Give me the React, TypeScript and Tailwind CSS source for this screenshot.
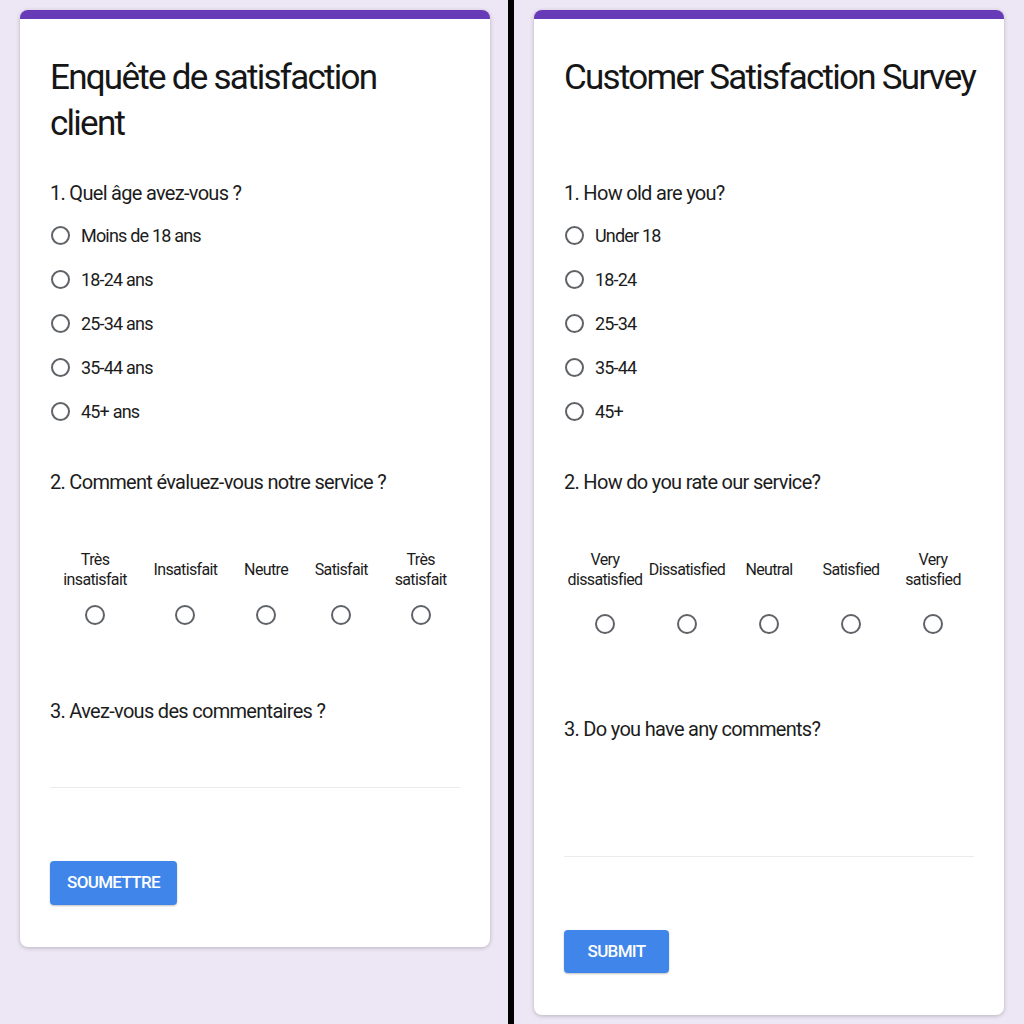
import React from "react";

type Survey = {
  title: string[];
  ageQuestion: string;
  ages: string[];
  rateQuestion: string;
  ratings: string[][];
  commentQuestion: string;
  submit: string;
  spread: "around" | "grid";
  radioGap: string;
  commentGap: string;
  inputHeight: string;
  buttonClass: string;
};

const surveys: Survey[] = [
  {
    title: ["Enquête de satisfaction", "client"],
    ageQuestion: "1. Quel âge avez-vous ?",
    ages: ["Moins de 18 ans", "18-24 ans", "25-34 ans", "35-44 ans", "45+ ans"],
    rateQuestion: "2. Comment évaluez-vous notre service ?",
    ratings: [["Très", "insatisfait"], ["Insatisfait"], ["Neutre"], ["Satisfait"], ["Très", "satisfait"]],
    commentQuestion: "3. Avez-vous des commentaires ?",
    submit: "Soumettre",
    spread: "around",
    radioGap: "mt-[15px]",
    commentGap: "mt-[72px]",
    inputHeight: "h-[63px]",
    buttonClass: "w-[127px] h-[44px]",
  },
  {
    title: ["Customer Satisfaction Survey"],
    ageQuestion: "1. How old are you?",
    ages: ["Under 18", "18-24", "25-34", "35-44", "45+"],
    rateQuestion: "2. How do you rate our service?",
    ratings: [["Very", "dissatisfied"], ["Dissatisfied"], ["Neutral"], ["Satisfied"], ["Very", "satisfied"]],
    commentQuestion: "3. Do you have any comments?",
    submit: "Submit",
    spread: "grid",
    radioGap: "mt-[24px]",
    commentGap: "mt-[81px]",
    inputHeight: "h-[114px]",
    buttonClass: "w-[105px] h-[43px]",
  },
];

function Radio({ size }: { size: string }) {
  return <span className={`${size} shrink-0 rounded-full border-2 border-[#5f6368]`} />;
}

function SurveyCard({ s }: { s: Survey }) {
  return (
    <div className="ml-[20px] w-[470px] rounded-lg border-t-[9px] border-[#673ab7] bg-white px-[30px] pt-[36px] pb-[42px] shadow-[0_1px_4px_rgba(0,0,0,0.22)]">
      <div className="h-[124px]">
        <h1 className="whitespace-nowrap text-[35px] leading-[46px] tracking-[-0.05em] text-[#161616]">
          {s.title.map((line) => (
            <span key={line} className="block">
              {line}
            </span>
          ))}
        </h1>
      </div>

      <p className="text-[20px] leading-[28px] tracking-[-0.035em] text-[#1c1c1c]">{s.ageQuestion}</p>
      <div className="mt-[6px]">
        {s.ages.map((a) => (
          <label key={a} className="flex h-[44px] items-center gap-[11px] pl-px">
            <Radio size="w-[19px] h-[19px]" />
            <span className="text-[18px] tracking-[-0.045em] text-[#1c1c1c]">{a}</span>
          </label>
        ))}
      </div>

      <p className="mt-[35px] text-[20px] leading-[28px] tracking-[-0.035em] text-[#1c1c1c]">{s.rateQuestion}</p>
      <div
        className={`mt-[54px] ${
          s.spread === "around" ? "flex justify-around" : "grid grid-cols-5"
        }`}
      >
        {s.ratings.map((lines) => (
          <div key={lines.join(" ")} className="flex flex-col items-center">
            <div className="flex h-[40px] flex-col items-center justify-center text-center text-[16px] leading-[20px] tracking-[-0.04em] text-[#1c1c1c]">
              {lines.map((l) => (
                <span key={l}>{l}</span>
              ))}
            </div>
            <div className={s.radioGap}>
              <Radio size="w-[20px] h-[20px] block" />
            </div>
          </div>
        ))}
      </div>

      <p className={`${s.commentGap} text-[20px] leading-[28px] tracking-[-0.035em] text-[#1c1c1c]`}>
        {s.commentQuestion}
      </p>
      <div className={`${s.inputHeight} border-b border-[#ebebeb]`} />

      <button
        className={`${s.buttonClass} mt-[73px] flex items-center justify-center rounded-sm bg-[#4086ea] text-[17px] font-medium uppercase tracking-[-0.04em] text-white shadow-[0_1px_2px_rgba(0,0,0,0.25)]`}
      >
        {s.submit}
      </button>
    </div>
  );
}

export default function App() {
  return (
    <div className="flex h-[1024px] w-[1024px] overflow-hidden bg-[#ede6f4] font-['Roboto','Noto_Sans',sans-serif]">
      <div className="w-[508px] pt-[10px]">
        <SurveyCard s={surveys[0]} />
      </div>
      <div className="w-[6px] bg-black" />
      <div className="flex-1 pt-[10px]">
        <SurveyCard s={surveys[1]} />
      </div>
    </div>
  );
}
